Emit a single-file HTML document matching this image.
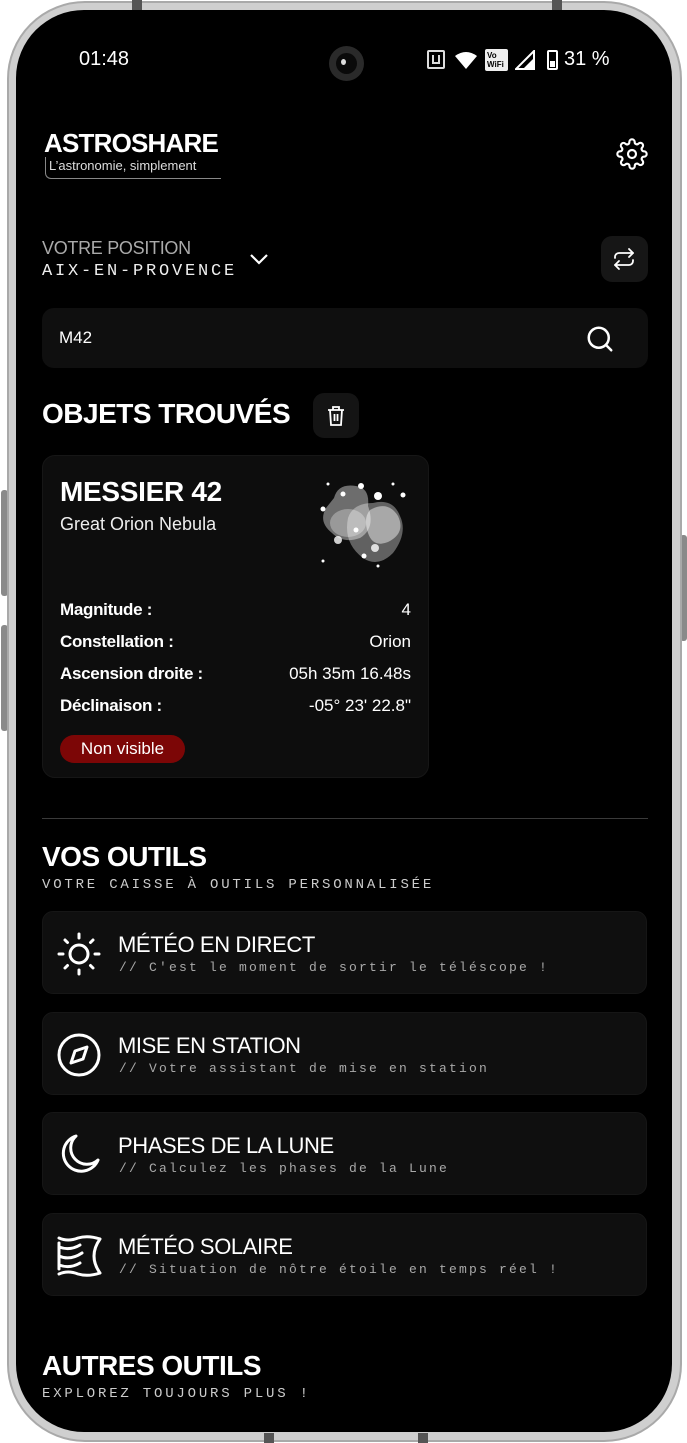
<!DOCTYPE html>
<html><head><meta charset="utf-8"><style>
*{margin:0;padding:0;box-sizing:border-box}
html,body{width:687px;height:1443px;background:#fff;overflow:hidden;font-family:"Liberation Sans",sans-serif;color:#fff}
.abs{position:absolute}
.frame{position:absolute;left:7px;top:1px;width:675px;height:1441px;border-radius:78px;background:#cfcfcf;border:2px solid #a9a9a9}
.screen{position:absolute;left:16px;top:10px;width:656px;height:1422px;border-radius:68px;background:#000;overflow:hidden}
.btn{position:absolute;background:#8a8a8a;border-radius:3px}
.mono{font-family:"Liberation Mono",monospace}
.h{font-weight:bold;font-size:28px;letter-spacing:-0.5px}
.tool{position:absolute;left:26px;width:605px;height:83px;background:#0f0f0f;border-radius:11px;border:1px solid #161616}
.tool .t{position:absolute;left:75px;top:20px;font-size:22px;letter-spacing:-0.4px}
.tool .s{position:absolute;left:76px;top:48px;font-size:13px;color:#a9a9a9;letter-spacing:2.2px;font-family:"Liberation Mono",monospace}
.tool svg{position:absolute;left:13px;top:19px}
.row{position:absolute;left:17px;right:17px;font-size:17px}
.row b{letter-spacing:-0.3px}
.row span{position:absolute;right:0;top:0}
</style></head><body>
<div class="btn" style="left:1px;top:490px;width:7px;height:106px"></div>
<div class="btn" style="left:1px;top:625px;width:7px;height:106px"></div>
<div class="btn" style="left:680px;top:535px;width:7px;height:106px"></div>
<div class="frame"></div>
<div class="abs" style="left:132px;top:0;width:10px;height:10px;background:#555"></div>
<div class="abs" style="left:552px;top:0;width:10px;height:10px;background:#555"></div>
<div class="abs" style="left:264px;top:1433px;width:10px;height:10px;background:#555"></div>
<div class="abs" style="left:418px;top:1433px;width:10px;height:10px;background:#555"></div>
<div class="screen">
 <div class="abs" style="left:63px;top:38px;font-size:20px">01:48</div>
 <div class="abs" style="left:313px;top:36px;width:35px;height:35px;border-radius:50%;background:#2a2a2a"><div class="abs" style="left:7px;top:7px;width:21px;height:21px;border-radius:50%;background:#0a0a0a"></div><div class="abs" style="left:12px;top:13px;width:5px;height:6px;border-radius:50%;background:#ddd"></div></div>
 <div class="abs" style="left:411px;top:40px;width:18px;height:19px;border:2px solid #ddd;border-radius:2px"><div class="abs" style="left:3px;top:3px;width:8px;height:9px;border:2px solid #ddd;border-top:none"></div></div>
 <svg class="abs" style="left:439px;top:42px" width="22" height="17" viewBox="0 0 22 17"><path d="M0 4Q11-4 22 4L11 17Z" fill="#fff"/></svg>
 <div class="abs" style="left:469px;top:39px;width:23px;height:22px;background:#eee;border-radius:2px;color:#000;font-size:8px;line-height:9px;font-weight:bold;padding:2px 0 0 2px">Vo<br>WiFi</div>
 <svg class="abs" style="left:499px;top:40px" width="20" height="20"><path d="M19 1V19H1Z" fill="none" stroke="#fff" stroke-width="2"/><path d="M19 8V19H8Z" fill="#fff"/></svg>
 <div class="abs" style="left:531px;top:40px;width:11px;height:20px;border:2px solid #fff;border-radius:2px"><div class="abs" style="left:1px;bottom:1px;width:5px;height:6px;background:#fff"></div></div>
 <div class="abs" style="left:548px;top:38px;font-size:20px">31 %</div>

 <div class="abs" style="left:28px;top:118px;font-size:26px;font-weight:bold;letter-spacing:-0.8px">ASTROSHARE</div>
 <div class="abs" style="left:29px;top:147px;width:176px;height:22px;border-left:1px solid #888;border-bottom:1px solid #888;border-bottom-left-radius:6px"></div>
 <div class="abs" style="left:33px;top:148px;font-size:13px;color:#ddd">L’astronomie, simplement</div>
 <svg class="abs" style="left:600px;top:128px" width="32" height="32" viewBox="0 0 24 24" fill="none" stroke="#fff" stroke-width="1.6"><circle cx="12" cy="12" r="3"/><path d="M19.4 15a1.65 1.65 0 0 0 .33 1.820l.06.06a2 2 0 1 1-2.83 2.83l-.06-.06a1.65 1.65 0 0 0-1.82-.33 1.65 1.65 0 0 0-1 1.51V21a2 2 0 1 1-4 0v-.09A1.65 1.65 0 0 0 9 19.4a1.65 1.65 0 0 0-1.82.33l-.06.06a2 2 0 1 1-2.83-2.830l.06-.06A1.65 1.65 0 0 0 4.68 15a1.65 1.65 0 0 0-1.51-1H3a2 2 0 1 1 0-4h.09A1.65 1.65 0 0 0 4.6 9a1.65 1.65 0 0 0-.33-1.82l-.06-.06a2 2 0 1 1 2.83-2.83l.06.06A1.65 1.65 0 0 0 9 4.68 1.65 1.65 0 0 0 10 3.17V3a2 2 0 1 1 4 0v.09A1.65 1.65 0 0 0 15 4.6a1.65 1.65 0 0 0 1.82-.33l.06-.06a2 2 0 1 1 2.83 2.83l-.06.06A1.65 1.65 0 0 0 19.4 9a1.65 1.65 0 0 0 1.51 1H21a2 2 0 1 1 0 4h-.09a1.65 1.65 0 0 0-1.51 1z"/></svg>

 <div class="abs" style="left:26px;top:228px;font-size:18px;color:#aaa;letter-spacing:-0.3px">VOTRE POSITION</div>
 <div class="abs mono" style="left:26px;top:252px;font-size:17px;letter-spacing:2.8px;color:#eee">AIX-EN-PROVENCE</div>
 <svg class="abs" style="left:233px;top:242px" width="20" height="14"><path d="M2 3L10 11L18 3" fill="none" stroke="#fff" stroke-width="2.2"/></svg>
 <div class="abs" style="left:585px;top:226px;width:47px;height:46px;background:#161616;border-radius:11px"></div>
 <svg class="abs" style="left:596px;top:237px" width="24" height="24" viewBox="0 0 24 24" fill="none" stroke="#fff" stroke-width="1.8" stroke-linecap="round" stroke-linejoin="round"><path d="M17 2l4 4-4 4"/><path d="M3 11V10a4 4 0 0 1 4-4h14"/><path d="M7 22l-4-4 4-4"/><path d="M21 13v1a4 4 0 0 1-4 4H3"/></svg>

 <div class="abs" style="left:26px;top:298px;width:606px;height:60px;background:#0f0f0f;border-radius:12px"></div>
 <div class="abs" style="left:43px;top:318px;font-size:17px">M42</div>
 <svg class="abs" style="left:569px;top:314px" width="30" height="30" viewBox="0 0 24 24" fill="none" stroke="#fff" stroke-width="2" stroke-linecap="round"><circle cx="11" cy="11" r="8"/><path d="M21 21l-4.3-4.3"/></svg>

 <div class="abs h" style="left:26px;top:388px">OBJETS TROUVÉS</div>
 <div class="abs" style="left:297px;top:383px;width:46px;height:45px;background:#141414;border-radius:11px"></div>
 <svg class="abs" style="left:310px;top:395px" width="20" height="22" viewBox="0 0 20 22" fill="none" stroke="#fff" stroke-width="1.8"><path d="M2 5H18M7 5V2H13V5M4 5L5 20H15L16 5M8.5 9V16M11.5 9V16"/></svg>

 <div class="abs" style="left:26px;top:445px;width:387px;height:323px;background:#0d0d0d;border-radius:13px;border:1px solid #161616">
  <div class="abs" style="left:17px;top:20px;font-size:28px;font-weight:bold;letter-spacing:-0.3px">MESSIER 42</div>
  <div class="abs" style="left:17px;top:58px;font-size:18px;color:#eee">Great Orion Nebula</div>
  <svg class="abs" style="left:275px;top:22px" width="95" height="90" viewBox="0 0 95 90">
   <path d="M16 20Q20 5 38 8Q52 10 50 28Q58 50 42 60Q25 66 14 55Q0 44 8 30Z" fill="#fff" opacity=".4"/>
   <path d="M30 40Q35 25 55 25Q75 20 82 38Q90 55 75 75Q60 90 45 80Q25 65 30 40Z" fill="#fff" opacity=".35"/>
   <path d="M52 32Q70 22 80 38Q88 55 70 64Q55 70 50 55Q45 40 52 32Z" fill="#fff" opacity=".45"/>
   <ellipse cx="30" cy="45" rx="18" ry="14" fill="#fff" opacity=".3"/>
   <g fill="#fff"><circle cx="43" cy="8" r="3"/><circle cx="60" cy="18" r="4"/><circle cx="85" cy="17" r="2.5"/><circle cx="5" cy="31" r="2.5"/><circle cx="25" cy="16" r="2.5"/><circle cx="38" cy="52" r="2.5"/><circle cx="20" cy="62" r="4" opacity=".8"/><circle cx="57" cy="70" r="4" opacity=".8"/><circle cx="46" cy="78" r="2.5"/><circle cx="5" cy="83" r="1.5"/><circle cx="60" cy="88" r="1.5"/><circle cx="10" cy="6" r="1.5"/><circle cx="75" cy="6" r="1.5"/></g>
  </svg>
  <div class="row" style="top:144px"><b>Magnitude :</b><span>4</span></div>
  <div class="row" style="top:176px"><b>Constellation :</b><span>Orion</span></div>
  <div class="row" style="top:208px"><b>Ascension droite :</b><span>05h 35m 16.48s</span></div>
  <div class="row" style="top:240px"><b>Déclinaison :</b><span>-05° 23' 22.8"</span></div>
  <div class="abs" style="left:17px;top:279px;width:125px;height:28px;background:#7c0606;border-radius:14px;font-size:17px;text-align:center;line-height:28px">Non visible</div>
 </div>

 <div class="abs" style="left:26px;top:808px;width:606px;height:1px;background:#3a3a3a"></div>
 <div class="abs h" style="left:26px;top:831px">VOS OUTILS</div>
 <div class="abs mono" style="left:26px;top:867px;font-size:14px;letter-spacing:2.8px;color:#ccc">VOTRE CAISSE À OUTILS PERSONNALISÉE</div>

 <div class="tool" style="top:901px">
  <svg width="46" height="46" viewBox="0 0 46 46" fill="none" stroke="#fff" stroke-width="3" stroke-linecap="round"><circle cx="23" cy="23" r="9"/><path d="M23 3V7M23 39V43M3 23H7M39 23H43M9 9L11.5 11.5M34.5 34.5L37 37M9 37L11.5 34.5M34.5 11.5L37 9"/></svg>
  <div class="t">MÉTÉO EN DIRECT</div><div class="s">// C'est le moment de sortir le téléscope !</div>
 </div>
 <div class="tool" style="top:1002px">
  <svg width="46" height="46" viewBox="0 0 46 46" fill="none" stroke="#fff" stroke-width="3" stroke-linejoin="round"><circle cx="23" cy="23" r="20"/><path d="M31 15L27 27L15 31L19 19Z"/></svg>
  <div class="t">MISE EN STATION</div><div class="s">// Votre assistant de mise en station</div>
 </div>
 <div class="tool" style="top:1102px">
  <svg width="46" height="46" viewBox="0 0 46 46" fill="none" stroke="#fff" stroke-width="3" stroke-linejoin="round"><path d="M20 4A18 18 0 1 0 42 28A14 14 0 0 1 20 4Z"/></svg>
  <div class="t">PHASES DE LA LUNE</div><div class="s">// Calculez les phases de la Lune</div>
 </div>
 <div class="tool" style="top:1203px">
  <svg width="46" height="46" viewBox="0 0 46 46" fill="none" stroke="#fff" stroke-width="3" stroke-linecap="round"><path d="M3 5Q12 9 22 5Q32 2 44 6M3 41Q12 37 22 41Q32 44 44 40M44 6Q32 23 44 40M3 14Q14 18 24 12M3 23Q14 28 26 20M3 32Q14 36 24 30M3 10L3 36"/></svg>
  <div class="t">MÉTÉO SOLAIRE</div><div class="s">// Situation de nôtre étoile en temps réel !</div>
 </div>

 <div class="abs h" style="left:26px;top:1340px">AUTRES OUTILS</div>
 <div class="abs mono" style="left:26px;top:1376px;font-size:14px;letter-spacing:2.8px;color:#ccc">EXPLOREZ TOUJOURS PLUS !</div>
</div>
</body></html>
